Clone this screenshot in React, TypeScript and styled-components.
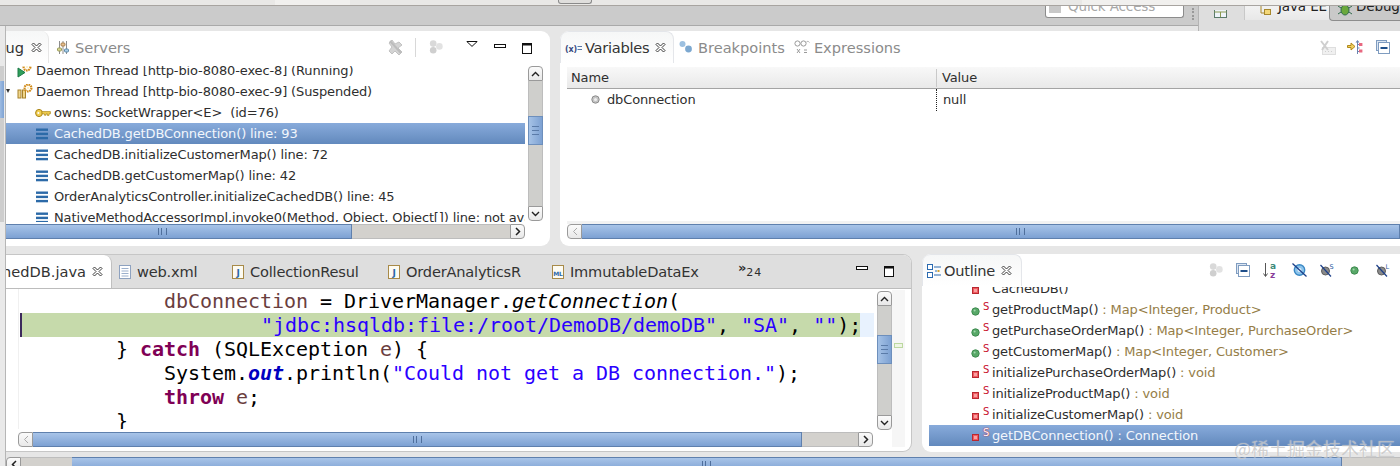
import styled, { createGlobalStyle } from 'styled-components';

const GlobalStyle = createGlobalStyle`
  html, body {
    margin: 0;
    padding: 0;
    background: #e6e6e6;
  }
`;

const BLUE_LINE = '#2c6aa8';

const CloseIcon = () => (
  <svg width="11" height="11" viewBox="0 0 11 11" style={{ flex: 'none' }}>
    <path
      d="M1 2.5 2.5 1 5.5 4 8.5 1 10 2.5 7 5.5 10 8.5 8.5 10 5.5 7 2.5 10 1 8.5 4 5.5Z"
      fill="#fff"
      stroke="#3a3a3a"
      strokeWidth="1"
    />
  </svg>
);

const ServersIcon = () => (
  <svg width="12" height="15" viewBox="0 0 12 15">
    <path d="M2.5 1v13M6 1v13M9.5 1v13" stroke="#8d8d8d" strokeWidth="1" />
    <rect x="0.5" y="8" width="4" height="3" rx="1" fill="#d8d890" stroke="#9a9a5c" />
    <rect x="4" y="3" width="4" height="3" rx="1" fill="#e8c090" stroke="#a8804c" />
    <rect x="7.5" y="9" width="4" height="3" rx="1" fill="#a8cde8" stroke="#5c8aa8" />
  </svg>
);

const Gear = ({ x, y }: { x: number; y: number }) => (
  <g>
    <circle cx={x} cy={y} r="3.4" fill="none" stroke="#d08a18" strokeWidth="2.2" strokeDasharray="1.6 0.7" />
    <circle cx={x} cy={y} r="1.3" fill="#fff2c8" />
  </g>
);

const RunningThreadIcon = () => (
  <svg width="16" height="15" viewBox="0 0 16 15">
    <path d="M1 5 8 9.5 1 14Z" fill="#2f9f5a" stroke="#1d7a48" />
    <Gear x={10} y={4} />
  </svg>
);

const SuspendedThreadIcon = () => (
  <svg width="16" height="15" viewBox="0 0 16 15">
    <rect x="1" y="6" width="3" height="8" fill="#f0d68c" stroke="#a8822c" />
    <rect x="5.5" y="6" width="3" height="8" fill="#f0d68c" stroke="#a8822c" />
    <Gear x={11} y={4} />
  </svg>
);

const KeyIcon = () => (
  <svg width="16" height="10" viewBox="0 0 16 10">
    <ellipse cx="4" cy="5" rx="3.4" ry="3.6" fill="#f2cf52" stroke="#a98416" />
    <circle cx="3.4" cy="5" r="1" fill="#fff" />
    <path d="M7 3.6h8.4v2.2h-1.4v1.6h-1.6V5.8h-1.4v1.4H9.4V5.8H7Z" fill="#f2cf52" stroke="#a98416" strokeWidth="0.7" />
  </svg>
);

const FrameIcon = () => (
  <svg width="12" height="12" viewBox="0 0 12 12">
    <rect x="0" y="0.5" width="12" height="2.4" fill={BLUE_LINE} />
    <rect x="0" y="4.7" width="12" height="2.4" fill={BLUE_LINE} />
    <rect x="0" y="8.9" width="12" height="2.4" fill={BLUE_LINE} />
  </svg>
);

const TwistyIcon = () => (
  <svg width="4" height="5" viewBox="0 0 4 5">
    <path d="M0 0h4L2 4Z" fill="#333" />
  </svg>
);

const BallsIcon = () => (
  <svg width="14" height="14" viewBox="0 0 14 14">
    <circle cx="4.2" cy="3.6" r="3.3" fill="#d9d9d9" />
    <circle cx="10.4" cy="6.4" r="3.3" fill="#e2e2e2" />
    <circle cx="4.2" cy="10.2" r="3.3" fill="#cfcfcf" />
  </svg>
);

const RemoveAllIcon = () => (
  <svg width="16" height="17" viewBox="0 0 16 17">
    <path d="M2 4 5 1 8 5 12 3 15 6 11 9 15 13 12 16 8 12 5 15 2 12 5 8Z" fill="#d4d4d4" stroke="#c2c2c2" />
    <path d="M3 2 14 14" stroke="#bcbcbc" strokeWidth="2" />
  </svg>
);

const MenuTriangle = () => (
  <svg width="12" height="6" viewBox="0 0 12 6">
    <path d="M0.8 0.5h10.4L6 5.4Z" fill="#fff" stroke="#111" />
  </svg>
);

const MinimizeIcon = () => (
  <svg width="12" height="4" viewBox="0 0 12 4">
    <rect x="0.5" y="0.5" width="11" height="3" fill="#fff" stroke="#111" />
  </svg>
);

const MaximizeIcon = () => (
  <svg width="10" height="11" viewBox="0 0 10 11">
    <rect x="0.5" y="0.5" width="9" height="10" fill="#fff" stroke="#111" />
    <rect x="0.5" y="0.5" width="9" height="2" fill="#111" />
  </svg>
);

const VariablesIcon = () => (
  <svg width="17" height="10" viewBox="0 0 17 10">
    <text x="0" y="8.5" fontFamily="'DejaVu Sans', sans-serif" fontSize="8" fontWeight="700" fill="#3a4a80">
      (x)
    </text>
    <path d="M12.5 3.5h4.5M12.5 6.5h4.5" stroke="#5a78a8" />
  </svg>
);

const BreakpointsIcon = () => (
  <svg width="14" height="14" viewBox="0 0 14 14">
    <circle cx="3.5" cy="4" r="3" fill="#9cc0e0" />
    <circle cx="9.5" cy="9" r="3.4" fill="#7ca8d0" />
  </svg>
);

const ExpressionsIcon = () => (
  <svg width="16" height="15" viewBox="0 0 16 15">
    <circle cx="3.5" cy="3.5" r="2.6" fill="none" stroke="#9a9a9a" />
    <circle cx="9.5" cy="3.5" r="2.6" fill="none" stroke="#9a9a9a" />
    <path d="M12 2.5c1-1.5 2.5-1.5 3.5 0" fill="none" stroke="#b0b0b0" />
    <path d="M3 9 6 13M6 9 3 13M10 10h3M10 12.5h3" stroke="#9a9a9a" />
  </svg>
);

const ShowTypesIcon = () => (
  <svg width="17" height="17" viewBox="0 0 17 17">
    <rect x="3.5" y="8.5" width="13" height="7" fill="#f0f0f0" stroke="#dedede" />
    <path d="M2 2 9 11M9 2 3 11" stroke="#cfcfcf" strokeWidth="2" />
    <path d="M6 12.5h1M9 12.5h1M12 12.5h1" stroke="#cfcfcf" />
  </svg>
);

const LogicalIcon = () => (
  <svg width="16" height="15" viewBox="0 0 16 15">
    <path d="M0.5 5.5h3.5V3l4 3.5-4 3.5V7.5H.5Z" fill="#f0d060" stroke="#b08818" />
    <path d="M10.5 1v13M10.5 4.5h2M10.5 8h2M10.5 11.5h2" stroke="#6a84b0" />
    <path d="M8.5 2.5 10.5 0l2 2.5Z" fill="#6a84b0" />
    <rect x="12" y="3" width="3.4" height="3" fill="#e86880" />
    <rect x="12" y="9.5" width="3.4" height="3" fill="#e86880" />
  </svg>
);

const CollapseIcon = () => (
  <svg width="14" height="14" viewBox="0 0 14 14">
    <rect x="0.5" y="0.5" width="10" height="10" fill="#dce6f2" stroke="#7f9cc0" />
    <rect x="2.5" y="2.5" width="11" height="11" fill="#fff" stroke="#7f9cc0" />
    <path d="M4.5 8h7" stroke="#1f4f8a" strokeWidth="2" />
  </svg>
);

const FileIcon = () => (
  <svg width="12" height="14" viewBox="0 0 12 14">
    <rect x="0.5" y="0.5" width="11" height="13" fill="#fff" stroke="#8ea2c0" />
    <path d="M2.5 3.5h7M2.5 6h7M2.5 8.5h7M2.5 11h7" stroke="#9cb0cc" />
  </svg>
);

const JavaFileIcon = ({ label = 'J' }: { label?: string }) => (
  <svg width="12" height="14" viewBox="0 0 12 14">
    <rect x="0.5" y="0.5" width="11" height="13" fill="#fdfbf2" stroke="#a88a48" />
    <text
      x="6"
      y="10.5"
      textAnchor="middle"
      fontFamily="'DejaVu Sans', sans-serif"
      fontSize={label.length > 1 ? 6 : 9}
      fontWeight="700"
      fill="#2a68a8"
    >
      {label}
    </text>
  </svg>
);

const OutlineIcon = () => (
  <svg width="14" height="14" viewBox="0 0 14 14">
    <rect x="0.5" y="0.5" width="5" height="5" fill="#fff" stroke="#2a6ab0" />
    <rect x="0.5" y="8.5" width="5" height="5" fill="#fff" stroke="#2a6ab0" />
    <path d="M7 3h7M7 11h7M8 7h2" stroke="#2a6ab0" />
    <rect x="10.5" y="6" width="2" height="2" fill="#d0a030" />
  </svg>
);

const SortIcon = () => (
  <svg width="17" height="16" viewBox="0 0 17 16">
    <path d="M2.5 1v13M0.5 11.5 2.5 14.5 4.5 11.5" fill="none" stroke="#555" />
    <text x="7" y="7" fontFamily="'DejaVu Sans', sans-serif" fontSize="9" fontWeight="700" fill="#3d8a7a">
      a
    </text>
    <text x="7" y="15.5" fontFamily="'DejaVu Sans', sans-serif" fontSize="9" fontWeight="700" fill="#8a3d9a">
      z
    </text>
  </svg>
);

const HideFieldsIcon = () => (
  <svg width="15" height="14" viewBox="0 0 15 14">
    <circle cx="7.5" cy="7" r="5.2" fill="#8cc4ec" stroke="#3a88c4" strokeWidth="1.4" />
    <circle cx="7.5" cy="7" r="2" fill="#e8f4fc" />
    <path d="M0.5 0.5 14.5 13.5" stroke="#1c3f88" strokeWidth="1.3" />
  </svg>
);

const HideLetterIcon = ({ letter }: { letter: string }) => (
  <svg width="14" height="14" viewBox="0 0 14 14">
    <circle cx="5.5" cy="8" r="4" fill="#8a8a8a" stroke="#5e5e5e" />
    <path d="M0.5 2 11 13.5" stroke="#1c3f88" strokeWidth="1.2" />
    <text x="9.5" y="6" fontFamily="'DejaVu Sans', sans-serif" fontSize="6.5" fill="#2a5aa0">
      {letter}
    </text>
  </svg>
);

const PublicDot = () => (
  <svg width="9" height="9" viewBox="0 0 9 9">
    <circle cx="4.5" cy="4.5" r="3.7" fill="#58a868" stroke="#3f8a50" />
    <circle cx="3.6" cy="3.4" r="1" fill="#a4d8ae" />
  </svg>
);

const PrivateSquare = () => (
  <svg width="7" height="7" viewBox="0 0 7 7">
    <rect x="0.5" y="0.5" width="6" height="6" fill="#f05a60" stroke="#b82830" />
    <rect x="2" y="2" width="3" height="3" fill="#f8a0a0" />
  </svg>
);

const LocalVarDot = () => (
  <svg width="9" height="9" viewBox="0 0 9 9">
    <circle cx="4.5" cy="4.5" r="3.7" fill="#c4c4c4" stroke="#8c8c8c" />
    <circle cx="4.5" cy="4.5" r="1.5" fill="#eee" />
  </svg>
);

const LayoutIcon = () => (
  <svg width="13" height="8" viewBox="0 1 13 8">
    <rect x="0.5" y="0.5" width="12" height="8" fill="#eef4fa" stroke="#5a7a6a" />
    <path d="M0.5 3h12M6.5 3v5" stroke="#8a9a50" />
  </svg>
);

const ArrowLeft = ({ dark }: { dark?: boolean }) => (
  <svg width="6" height="9" viewBox="0 0 6 9">
    <path d="M5 1 1.5 4.5 5 8" fill="none" stroke={dark ? '#222' : '#aaa'} strokeWidth={dark ? 1.5 : 1} />
  </svg>
);

const ArrowRight = () => (
  <svg width="6" height="9" viewBox="0 0 6 9">
    <path d="M1 1 4.5 4.5 1 8" fill="none" stroke="#222" strokeWidth="1.5" />
  </svg>
);

const ArrowUp = () => (
  <svg width="9" height="6" viewBox="0 0 9 6">
    <path d="M1 5 4.5 1.5 8 5" fill="none" stroke="#222" strokeWidth="1.4" />
  </svg>
);

const ArrowDown = () => (
  <svg width="9" height="6" viewBox="0 0 9 6">
    <path d="M1 1 4.5 4.5 8 1" fill="none" stroke="#222" strokeWidth="1.4" />
  </svg>
);

const debugRows = [
  { indent: 11, icon: <RunningThreadIcon />, gap: 3, text: 'Daemon Thread [http-bio-8080-exec-8] (Running)' },
  { indent: 0, twisty: true, icon: <SuspendedThreadIcon />, gap: 3, text: 'Daemon Thread [http-bio-8080-exec-9] (Suspended)' },
  { indent: 29, icon: <KeyIcon />, gap: 3, text: 'owns: SocketWrapper<E>  (id=76)' },
  { indent: 30, icon: <FrameIcon />, gap: 6, text: 'CachedDB.getDBConnection() line: 93', selected: true },
  { indent: 30, icon: <FrameIcon />, gap: 6, text: 'CachedDB.initializeCustomerMap() line: 72' },
  { indent: 30, icon: <FrameIcon />, gap: 6, text: 'CachedDB.getCustomerMap() line: 42' },
  { indent: 30, icon: <FrameIcon />, gap: 6, text: 'OrderAnalyticsController.initializeCachedDB() line: 45' },
  { indent: 30, icon: <FrameIcon />, gap: 6, text: 'NativeMethodAccessorImpl.invoke0(Method, Object, Object[]) line: not available [native method]' },
];

const outlineRows = [
  { pub: false, name: 'CachedDB()', type: '' },
  { pub: true, name: 'getProductMap()', type: ' : Map<Integer, Product>' },
  { pub: true, name: 'getPurchaseOrderMap()', type: ' : Map<Integer, PurchaseOrder>' },
  { pub: true, name: 'getCustomerMap()', type: ' : Map<Integer, Customer>' },
  { pub: false, name: 'initializePurchaseOrderMap()', type: ' : void' },
  { pub: false, name: 'initializeProductMap()', type: ' : void' },
  { pub: false, name: 'initializeCustomerMap()', type: ' : void' },
  { pub: false, name: 'getDBConnection()', type: ' : Connection', selected: true },
];

const editorTabs = [
  { icon: <FileIcon />, label: 'web.xml', width: 113 },
  { icon: <JavaFileIcon />, label: 'CollectionResul', width: 156 },
  { icon: <JavaFileIcon />, label: 'OrderAnalyticsR', width: 164 },
  { icon: <JavaFileIcon label="ML" />, label: 'ImmutableDataEx', width: 186 },
];

const App = () => (
  <Page>
    <GlobalStyle />
    <TitleStrip>
      <TitleSegment $width={275} />
      <TitleSegment $width={75} $light />
      <TitleSegment $width={208} />
      <FadedButton />
      <TitleSegment $width={490} />
      <TitleSegment $light />
    </TitleStrip>
    <Toolbar>
      <QuickAccess>
        <QuickIcon />
        <PerspectiveLabel>Quick Access</PerspectiveLabel>
      </QuickAccess>
      <GripLine />
      <Perspectives>
        <PerspectiveOpen>
          <LayoutIcon />
        </PerspectiveOpen>
        <JavaPerspective>
          <svg width="13" height="9" viewBox="0 2 13 9">
            <path d="M1 1h5M3 1v8h3" fill="none" stroke="#a8882c" />
            <rect x="6.5" y="5.5" width="6" height="5" fill="#f4d878" stroke="#a8882c" />
          </svg>
          <PerspectiveLabel>Java EE</PerspectiveLabel>
        </JavaPerspective>
        <DebugPerspective>
          <svg width="16" height="10" viewBox="0 3 16 10">
            <ellipse cx="8" cy="7" rx="4" ry="5" fill="#6aa83c" stroke="#2f6a4a" />
            <path d="M1 3l3 2M15 3l-3 2M1 11l3-2M15 11l-3-2" stroke="#2f6a4a" />
          </svg>
          <PerspectiveLabel>Debug</PerspectiveLabel>
        </DebugPerspective>
      </Perspectives>
    </Toolbar>
    <Body>
      <Gutter>
        <GutterScroll>
          <GutterThumb />
        </GutterScroll>
      </Gutter>
      <Main>
        <TopRow>
          <DebugPanel>
            <ViewHeader>
              <ClippedTab $width={43}>
                <TabLabel>Debug</TabLabel>
                <CloseIcon />
              </ClippedTab>
              <PlainTab $gap={6} $left={8}>
                <ServersIcon />
                <TabLabel $muted>Servers</TabLabel>
              </PlainTab>
              <ViewTools>
                <ToolSlot $left={0}>
                  <RemoveAllIcon />
                </ToolSlot>
                <ToolSep />
                <ToolSlot $left={13}>
                  <BallsIcon />
                </ToolSlot>
                <ToolSlot $left={23} $up={7}>
                  <MenuTriangle />
                </ToolSlot>
                <ToolSlot $left={16} $up={3}>
                  <MinimizeIcon />
                </ToolSlot>
                <ToolSlot $left={16} $up={-2}>
                  <MaximizeIcon />
                </ToolSlot>
              </ViewTools>
            </ViewHeader>
            <DebugBody>
              <DebugList>
                <DebugRows>
                  {debugRows.map((row) => (
                    <TreeRow key={row.text} $indent={row.indent} $selected={row.selected}>
                      {row.twisty && (
                        <Twisty>
                          <TwistyIcon />
                        </Twisty>
                      )}
                      {row.icon}
                      <RowText $gap={row.gap}>{row.text}</RowText>
                    </TreeRow>
                  ))}
                </DebugRows>
              </DebugList>
              <VScroll $height={155} $margin="0 7px 0 3px">
                <ScrollButton $dir="up">
                  <ArrowUp />
                </ScrollButton>
                <VTrack $height={35} />
                <VThumb $height={29}>
                  <ThumbGrip />
                </VThumb>
                <VTrack $flex />
                <ScrollButton $dir="down">
                  <ArrowDown />
                </ScrollButton>
              </VScroll>
            </DebugBody>
            <HScroll $width={519} $top={2}>
              <HThumb $width={346} $gripShift={-32}>
                <HGrip />
              </HThumb>
              <HTrack />
              <ScrollButton $dir="right">
                <ArrowRight />
              </ScrollButton>
            </HScroll>
          </DebugPanel>
          <VariablesPanel>
            <ViewHeader $height={36}>
              <ActiveTab $width={114}>
                <VariablesIcon />
                <TabLabel $tight>Variables</TabLabel>
                <CloseIcon />
              </ActiveTab>
              <PlainTab $gap={5} $left={5}>
                <BreakpointsIcon />
                <TabLabel $muted>Breakpoints</TabLabel>
              </PlainTab>
              <PlainTab $gap={4} $left={9}>
                <ExpressionsIcon />
                <TabLabel $muted>Expressions</TabLabel>
              </PlainTab>
              <ViewTools $pad={10}>
                <ToolSlot $left={0}>
                  <ShowTypesIcon />
                </ToolSlot>
                <ToolSlot $left={11}>
                  <LogicalIcon />
                </ToolSlot>
                <ToolSlot $left={13}>
                  <CollapseIcon />
                </ToolSlot>
              </ViewTools>
            </ViewHeader>
            <VarTable>
              <VarHead>
                <VarNameHead>Name</VarNameHead>
                <VarValueHead>Value</VarValueHead>
              </VarHead>
              <VarRow>
                <VarName>
                  <LocalVarDot />
                  dbConnection
                </VarName>
                <VarValue>null</VarValue>
              </VarRow>
            </VarTable>
            <VarScrollEdge />
            <HScroll $left={7}>
              <ScrollButton $dir="left">
                <ArrowLeft />
              </ScrollButton>
              <HThumb $flex $gripShift={60}>
                <HGrip />
              </HThumb>
            </HScroll>
          </VariablesPanel>
        </TopRow>
        <BottomRow>
          <EditorPanel>
            <EditorTabs>
              <ClippedTab $width={106} $solid>
                <TabLabel>CachedDB.java</TabLabel>
                <CloseIcon />
              </ClippedTab>
              {editorTabs.map((tab) => (
                <EditorTab key={tab.label} $width={tab.width}>
                  {tab.icon}
                  <TabLabel $narrow>{tab.label}</TabLabel>
                </EditorTab>
              ))}
              <MoreTabs>
                »<sub>24</sub>
              </MoreTabs>
              <EditorTools>
                <MinimizeIcon />
                <MaximizeIcon />
              </EditorTools>
            </EditorTabs>
            <EditorBody>
              <CodeColumn>
                <CodeArea>
                  <CodeLine>
                    {'            '}
                    <Field>dbConnection</Field> = DriverManager.<StaticCall>getConnection</StaticCall>(
                  </CodeLine>
                  <DebugLine>
                    <DebugLineFill>
                      {'                    '}
                      <Str>"jdbc:hsqldb:file:/root/DemoDB/demoDB"</Str>, <Str>"SA"</Str>, <Str>""</Str>);
                    </DebugLineFill>
                  </DebugLine>
                  <CodeLine>
                    {'        }'} <Keyword>catch</Keyword> (SQLException <Field>e</Field>) {'{'}
                  </CodeLine>
                  <CodeLine>
                    {'            '}System.<StaticField>out</StaticField>.println(
                    <Str>"Could not get a DB connection."</Str>);
                  </CodeLine>
                  <CodeLine>
                    {'            '}
                    <Keyword>throw</Keyword> <Field>e</Field>;
                  </CodeLine>
                  <CodeLine>{'        }'}</CodeLine>
                </CodeArea>
                <HScroll $width={855} $top={3} $left={12}>
                  <ScrollButton $dir="left">
                    <ArrowLeft />
                  </ScrollButton>
                  <HThumb $flex>
                    <HGrip />
                  </HThumb>
                  <HTrack $width={56} />
                  <ScrollButton $dir="right">
                    <ArrowRight />
                  </ScrollButton>
                </HScroll>
              </CodeColumn>
              <VScroll $height={139} $margin="2px 0 0 3px">
                <ScrollButton $dir="up">
                  <ArrowUp />
                </ScrollButton>
                <VTrack $height={29} />
                <VThumb $height={29}>
                  <ThumbGrip />
                </VThumb>
                <VTrack $flex />
                <ScrollButton $dir="down">
                  <ArrowDown />
                </ScrollButton>
              </VScroll>
              <OverviewRuler>
                <RulerMark />
              </OverviewRuler>
            </EditorBody>
          </EditorPanel>
          <OutlinePanel>
            <OutlineHeader>
              <ActiveTab $width={100}>
                <OutlineIcon />
                <TabLabel $tight>Outline</TabLabel>
                <CloseIcon />
              </ActiveTab>
              <ViewTools $pad={10}>
                <ToolSlot $left={0}>
                  <BallsIcon />
                </ToolSlot>
                <ToolSlot $left={13}>
                  <CollapseIcon />
                </ToolSlot>
                <ToolSlot $left={13}>
                  <SortIcon />
                </ToolSlot>
                <ToolSlot $left={12}>
                  <HideFieldsIcon />
                </ToolSlot>
                <ToolSlot $left={13}>
                  <HideLetterIcon letter="S" />
                </ToolSlot>
                <ToolSlot $left={16}>
                  <PublicDot />
                </ToolSlot>
                <ToolSlot $left={17}>
                  <HideLetterIcon letter="L" />
                </ToolSlot>
              </ViewTools>
            </OutlineHeader>
            <OutlineList>
              <OutlineRows>
                {outlineRows.map((row) => (
                  <OutlineRow key={row.name} $selected={row.selected}>
                    <Visibility>{row.pub ? <PublicDot /> : <PrivateSquare />}</Visibility>
                    <StaticMark $hidden={row.name === 'CachedDB()'} $selected={row.selected}>
                      S
                    </StaticMark>
                    <span>{row.name}</span>
                    <ReturnType $selected={row.selected}>{row.type}</ReturnType>
                  </OutlineRow>
                ))}
              </OutlineRows>
            </OutlineList>
          </OutlinePanel>
        </BottomRow>
        <WindowScroll>
          <ScrollButton $dir="left">
            <ArrowLeft dark />
          </ScrollButton>
          <HTrack $width={51} />
          <HThumb $width={1270}>
            <HGrip />
          </HThumb>
          <HTrack />
        </WindowScroll>
      </Main>
    </Body>
    <Watermark>@稀土掘金技术社区</Watermark>
  </Page>
);

export default App;

const Page = styled.div`
  position: relative;
  width: 1400px;
  height: 466px;
  overflow: hidden;
  display: flex;
  flex-direction: column;
  background: #e6e6e6;
  font-family: 'DejaVu Sans', sans-serif;
  font-size: 13px;
  letter-spacing: -0.13px;
  color: #2e2e2e;
`;

const TitleStrip = styled.div`
  height: 5px;
  display: flex;
  background: #e9e8e6;
  border-bottom: 1px solid #a8a4a0;
  flex: none;
`;

const TitleSegment = styled.div<{ $width?: number; $light?: boolean }>`
  width: ${(p) => (p.$width ? `${p.$width}px` : 'auto')};
  flex: ${(p) => (p.$width ? 'none' : 1)};
  background: ${(p) => (p.$light ? '#f1f0ee' : '#e9e8e6')};
`;

const FadedButton = styled.div`
  width: 32px;
  height: 3px;
  background: #dfdedc;
  border: 1px solid #8a8a8a;
  border-top: 0;
  border-radius: 0 0 3px 3px;
  flex: none;
`;

const Toolbar = styled.div`
  height: 19px;
  flex: none;
  display: flex;
  justify-content: flex-end;
  background: #cbcbcb;
  border-bottom: 1px solid #a9a9a9;
  position: relative;
  overflow: visible;
`;

const QuickAccess = styled.div`
  width: 134px;
  height: 11px;
  flex: none;
  margin-right: 8px;
  padding-left: 3px;
  display: flex;
  align-items: flex-start;
  gap: 7px;
  background: #fff;
  border: 1px solid #8c8c8c;
  border-top: 0;
  border-radius: 0 0 3px 3px;
  color: #a8a8a8;
  overflow: hidden;
`;

const QuickIcon = styled.span`
  width: 12px;
  height: 7px;
  background: #c8c8c8;
  flex: none;
`;

const GripLine = styled.div`
  width: 3px;
  margin-right: 1px;
  margin-top: 2px;
  height: 12px;
  border-left: 2px dotted #999;
  flex: none;
`;

const Perspectives = styled.div`
  width: 201px;
  height: 25px;
  flex: none;
  display: flex;
  background: #dedede;
  border-left: 1px solid #b4b4b4;
  overflow: hidden;
`;

const PerspectiveOpen = styled.div`
  width: 45px;
  padding: 0 0 0 15px;
  box-sizing: border-box;
  flex: none;
`;

const PerspectiveLabel = styled.span`
  margin-top: -7px;
  font-size: 13.5px;
  line-height: 15px;
  white-space: pre;
`;

const JavaPerspective = styled.div`
  width: 85px;
  height: 14px;
  flex: none;
  display: flex;
  gap: 7px;
  padding-left: 13px;
  box-sizing: border-box;
  align-items: flex-start;
  border-left: 1px solid #c8c8c8;
  background: linear-gradient(#f2f2f2, #e8e8e8);
  color: #222;
  overflow: hidden;
`;

const DebugPerspective = styled.div`
  height: 14px;
  flex: 1;
  display: flex;
  gap: 3px;
  padding-left: 7px;
  align-items: flex-start;
  background: #c9c9c9;
  border: 1px solid #8d8d8d;
  border-top: 0;
  border-right: 0;
  border-radius: 0 0 0 4px;
  color: #222;
  overflow: hidden;
`;

const Body = styled.div`
  flex: 1;
  display: flex;
  min-height: 0;
`;

const Gutter = styled.div`
  width: 5px;
  flex: none;
  border-right: 1px solid #b6b6b6;
  padding-top: 40px;
  background: #e9e9e9;
`;

const GutterScroll = styled.div`
  height: 156px;
  background: #cdcdcd;
  padding-top: 15px;
  margin-right: 1px;
  box-sizing: border-box;
`;

const GutterThumb = styled.div`
  height: 37px;
  background: linear-gradient(90deg, #9dbbe2, #7fa3d3);
`;

const Main = styled.div`
  flex: 1;
  min-width: 0;
  padding-top: 5px;
  display: flex;
  flex-direction: column;
`;

const TopRow = styled.div`
  height: 215px;
  flex: none;
  display: flex;
  gap: 10px;
`;

const BottomRow = styled.div`
  height: 198px;
  flex: none;
  margin-top: 8px;
  display: flex;
  gap: 10px;
`;

const DebugPanel = styled.section`
  width: 544px;
  flex: none;
  background: #fff;
  border-radius: 0 9px 9px 0;
  overflow: hidden;
  display: flex;
  flex-direction: column;
`;

const VariablesPanel = styled.section`
  flex: 1;
  min-width: 0;
  background: #fff;
  border-radius: 9px 0 0 9px;
  overflow: hidden;
  display: flex;
  flex-direction: column;
`;

const ViewHeader = styled.header<{ $height?: number }>`
  height: ${(p) => p.$height ?? 35}px;
  flex: none;
  display: flex;
  align-items: stretch;
`;

const ClippedTab = styled.div<{ $width: number; $solid?: boolean }>`
  width: ${(p) => p.$width}px;
  flex: none;
  height: ${(p) => (p.$solid ? 33 : 32)}px;
  display: flex;
  align-items: center;
  justify-content: flex-end;
  gap: ${(p) => (p.$solid ? 6 : 7)}px;
  padding-right: ${(p) => (p.$solid ? 8 : 6)}px;
  box-sizing: border-box;
  overflow: hidden;
  background: ${(p) => (p.$solid ? '#fff' : 'linear-gradient(#f6f7f7, #ffffff)')};
  border-right: 1px solid ${(p) => (p.$solid ? '#c0c0c0' : '#e6e6e6')};
  border-radius: 0 8px 0 0;
`;

const ActiveTab = styled.div<{ $width: number }>`
  width: ${(p) => p.$width}px;
  flex: none;
  height: 32px;
  display: flex;
  align-items: center;
  gap: 3px;
  padding-left: 4px;
  box-sizing: border-box;
  background: linear-gradient(#f6f7f7, #ffffff);
  border: 1px solid #e4e6ea;
  border-bottom: 0;
  border-radius: 8px 8px 0 0;
  & > svg:last-child {
    margin-left: 3px;
  }
`;

const PlainTab = styled.div<{ $gap?: number; $left?: number }>`
  height: 32px;
  flex: none;
  display: flex;
  align-items: center;
  gap: ${(p) => p.$gap ?? 5}px;
  margin-left: ${(p) => p.$left ?? 5}px;
`;

const TabLabel = styled.span<{ $muted?: boolean; $tight?: boolean; $narrow?: boolean }>`
  font-size: 14.6px;
  letter-spacing: ${(p) => (p.$tight ? -0.25 : p.$narrow ? -0.2 : 0)}px;
  white-space: pre;
  flex: none;
  color: ${(p) => (p.$muted ? '#8b8b8b' : '#333')};
`;

const ViewTools = styled.div<{ $pad?: number }>`
  margin-left: auto;
  height: 32px;
  display: flex;
  align-items: center;
  padding-right: ${(p) => p.$pad ?? 18}px;
`;

const ToolSlot = styled.span<{ $left: number; $up?: number }>`
  display: flex;
  flex: none;
  margin-left: ${(p) => p.$left}px;
  margin-bottom: ${(p) => p.$up ?? 0}px;
`;

const ToolSep = styled.span`
  width: 1px;
  height: 19px;
  margin-left: 12px;
  background: #d8d8d8;
  flex: none;
`;

const DebugBody = styled.div`
  height: 156px;
  flex: none;
  display: flex;
`;

const DebugList = styled.div`
  flex: 1;
  min-width: 0;
  overflow: hidden;
`;

const DebugRows = styled.div`
  margin-top: -6px;
`;

const TreeRow = styled.div<{ $indent: number; $selected?: boolean }>`
  height: 21px;
  display: flex;
  align-items: center;
  padding-left: ${(p) => p.$indent}px;
  white-space: pre;
  color: ${(p) => (p.$selected ? '#f2f6fc' : '#2e2e2e')};
  background: ${(p) => (p.$selected ? 'linear-gradient(#88abdb, #6289bd)' : 'transparent')};
  & > svg {
    flex: none;
  }
`;

const Twisty = styled.span`
  width: 11px;
  flex: none;
  display: flex;
`;

const RowText = styled.span<{ $gap: number }>`
  margin-left: ${(p) => p.$gap}px;
`;

const VScroll = styled.div<{ $height: number; $margin: string }>`
  width: 15px;
  height: ${(p) => p.$height}px;
  margin: ${(p) => p.$margin};
  flex: none;
  display: flex;
  flex-direction: column;
`;

const ScrollButton = styled.div<{ $dir: 'up' | 'down' | 'left' | 'right' }>`
  flex: none;
  display: flex;
  align-items: center;
  justify-content: center;
  box-sizing: border-box;
  width: 15px;
  height: ${(p) => (p.$dir === 'up' || p.$dir === 'down' ? '15px' : '100%')};
  background: linear-gradient(#fbfbfb, #e8e8e8);
  border: 1px solid #9a9a9a;
  border-radius: ${(p) =>
    p.$dir === 'up'
      ? '4px 4px 0 0'
      : p.$dir === 'down'
        ? '0 0 4px 4px'
        : p.$dir === 'left'
          ? '4px 0 0 4px'
          : '0 4px 4px 0'};
`;

const VTrack = styled.div<{ $height?: number; $flex?: boolean }>`
  flex: ${(p) => (p.$flex ? 1 : 'none')};
  height: ${(p) => (p.$height ? `${p.$height}px` : 'auto')};
  background: #cfcfcc;
  border-left: 1px solid #bdbdbd;
  border-right: 1px solid #bdbdbd;
`;

const VThumb = styled.div<{ $height: number }>`
  flex: none;
  height: ${(p) => p.$height}px;
  display: flex;
  align-items: center;
  justify-content: center;
  background: linear-gradient(90deg, #a5c2e6, #7da1d2);
  border: 1px solid #6d8fbc;
  box-sizing: border-box;
`;

const ThumbGrip = styled.span`
  width: 7px;
  height: 7px;
  border-top: 1px solid #5a7ba8;
  border-bottom: 1px solid #5a7ba8;
  position: relative;
  &::after {
    content: '';
    position: absolute;
    left: 0;
    right: 0;
    top: 3px;
    height: 1px;
    background: #5a7ba8;
  }
`;

const HScroll = styled.div<{ $width?: number; $top?: number; $left?: number }>`
  height: 15px;
  flex: none;
  width: ${(p) => (p.$width ? `${p.$width}px` : 'auto')};
  margin-top: ${(p) => p.$top ?? 0}px;
  margin-left: ${(p) => p.$left ?? 0}px;
  display: flex;
`;

const HThumb = styled.div<{ $width?: number; $flex?: boolean; $gripShift?: number }>`
  flex: ${(p) => (p.$flex ? 1 : 'none')};
  width: ${(p) => (p.$width ? `${p.$width}px` : 'auto')};
  display: flex;
  align-items: center;
  justify-content: center;
  padding-left: ${(p) => Math.max(p.$gripShift ?? 0, 0)}px;
  padding-right: ${(p) => Math.max(-(p.$gripShift ?? 0), 0)}px;
  background: linear-gradient(#a8c4e8, #7da1d3);
  border-top: 1px solid #5f80ad;
  border-bottom: 1px solid #5f80ad;
  border-right: 1px solid #5f80ad;
  box-sizing: border-box;
`;

const HGrip = styled.span`
  width: 7px;
  height: 7px;
  border-left: 1px solid #4f6f9c;
  border-right: 1px solid #4f6f9c;
  position: relative;
  &::after {
    content: '';
    position: absolute;
    top: 0;
    bottom: 0;
    left: 2px;
    width: 1px;
    background: #4f6f9c;
  }
`;

const HTrack = styled.div<{ $width?: number }>`
  flex: ${(p) => (p.$width ? 'none' : 1)};
  width: ${(p) => (p.$width ? `${p.$width}px` : 'auto')};
  background: #d3d1cd;
  border-top: 1px solid #bdbdbd;
  border-bottom: 1px solid #bdbdbd;
  box-sizing: border-box;
`;

const VarTable = styled.div`
  height: 154px;
  flex: none;
  margin-left: 7px;
`;

const VarHead = styled.div`
  height: 22px;
  display: flex;
  box-sizing: border-box;
  align-items: center;
  background: linear-gradient(#f8f8f8, #e9e9e9);
  border-bottom: 1px solid #a4a4a4;
`;

const VarNameHead = styled.div`
  width: 369px;
  padding-left: 4px;
  box-sizing: border-box;
  flex: none;
`;

const VarValueHead = styled.div`
  padding-left: 5px;
  height: 18px;
  line-height: 18px;
  border-left: 1px solid #c9c9c9;
`;

const VarRow = styled.div`
  display: flex;
  height: 22px;
  align-items: flex-start;
`;

const VarName = styled.div`
  width: 369px;
  height: 20px;
  flex: none;
  box-sizing: border-box;
  padding-left: 24px;
  display: flex;
  align-items: center;
  gap: 7px;
`;

const VarValue = styled.div`
  padding-left: 6px;
  height: 22px;
  line-height: 21px;
  border-left: 1px dotted #222;
`;

const VarScrollEdge = styled.div`
  height: 3px;
  margin-left: 7px;
  flex: none;
  background: #f2f2f2;
`;

const EditorPanel = styled.section`
  width: 906px;
  flex: none;
  box-sizing: border-box;
  background: #fff;
  border: 1px solid #c6c6c6;
  border-left: 0;
  border-radius: 0 9px 9px 0;
  overflow: hidden;
  display: flex;
  flex-direction: column;
`;

const EditorTabs = styled.div`
  height: 33px;
  flex: none;
  display: flex;
  background: #dedede;
  border-bottom: 1px solid #bcbcbc;
`;

const EditorTab = styled.div<{ $width: number }>`
  width: ${(p) => p.$width}px;
  flex: none;
  display: flex;
  align-items: center;
  gap: 6px;
  padding-left: 7px;
  box-sizing: border-box;
`;

const MoreTabs = styled.div`
  width: 40px;
  flex: none;
  margin-left: 7px;
  font-size: 13px;
  font-weight: 700;
  line-height: 26px;
  sub {
    font-size: 11px;
    font-weight: 400;
    vertical-align: -4px;
    letter-spacing: 1px;
  }
`;

const EditorTools = styled.div`
  margin-left: auto;
  padding: 11px 17px 0 0;
  display: flex;
  align-items: flex-start;
  gap: 16px;
`;

const EditorBody = styled.div`
  flex: 1;
  min-height: 0;
  display: flex;
`;

const CodeColumn = styled.div`
  width: 868px;
  flex: none;
`;

const CodeArea = styled.pre`
  margin: 0;
  height: 140px;
  padding-left: 14px;
  box-sizing: border-box;
  overflow: hidden;
  font-family: 'DejaVu Sans Mono', monospace;
  font-size: 20px;
  line-height: 24px;
  letter-spacing: -0.04px;
  color: #000;
  box-shadow: inset 12px 0 0 #fff, inset 13px 0 0 #f0f0f0;
`;

const CodeLine = styled.div`
  height: 24px;
  white-space: pre;
`;

const DebugLine = styled.div`
  height: 24px;
  background: #e8f2fe;
  border-left: 2px solid #3c2a5c;
`;

const DebugLineFill = styled.div`
  width: 838px;
  height: 24px;
  text-indent: -1px;
  background: #c6daab;
  white-space: pre;
`;

const Field = styled.span`
  color: #6a3e3e;
`;

const Str = styled.span`
  color: #2a00ff;
`;

const Keyword = styled.span`
  color: #7f0055;
  font-weight: 700;
`;

const StaticCall = styled.span`
  font-style: italic;
`;

const StaticField = styled.span`
  color: #0000c0;
  font-style: italic;
  font-weight: 700;
`;

const OverviewRuler = styled.div`
  width: 13px;
  margin-top: 1px;
  height: 157px;
  flex: none;
  background: #f6f6f6;
  padding: 53px 0 0 2px;
  box-sizing: border-box;
`;

const RulerMark = styled.div`
  width: 9px;
  height: 5px;
  box-sizing: border-box;
  background: #eef5e4;
  border: 1px solid #bcd8a0;
`;

const OutlinePanel = styled.section`
  flex: 1;
  min-width: 0;
  background: #fff;
  border-radius: 9px 0 0 9px;
  overflow: hidden;
  display: flex;
  flex-direction: column;
`;

const OutlineHeader = styled.header`
  height: 33px;
  flex: none;
  display: flex;
`;

const OutlineList = styled.div`
  flex: 1;
  min-height: 0;
  overflow: hidden;
`;

const OutlineRows = styled.div`
  margin-top: -9px;
  padding-left: 7px;
`;

const OutlineRow = styled.div<{ $selected?: boolean }>`
  height: 21px;
  display: flex;
  align-items: center;
  padding-left: 40px;
  white-space: pre;
  color: ${(p) => (p.$selected ? '#f2f6fc' : '#2e2e2e')};
  background: ${(p) => (p.$selected ? 'linear-gradient(#88abdb, #6289bd)' : 'transparent')};
`;

const Visibility = styled.span`
  width: 12px;
  flex: none;
  display: flex;
  justify-content: center;
  margin-top: 3px;
`;

const StaticMark = styled.span<{ $hidden?: boolean; $selected?: boolean }>`
  width: 11px;
  flex: none;
  padding-left: 2px;
  box-sizing: border-box;
  font-size: 10px;
  line-height: 9px;
  margin-bottom: 7px;
  visibility: ${(p) => (p.$hidden ? 'hidden' : 'visible')};
  color: ${(p) => (p.$selected ? '#fff' : '#c8102e')};
  text-shadow: ${(p) => (p.$selected ? '0 0 1px #c8102e, 0 0 1px #c8102e' : 'none')};
`;

const ReturnType = styled.span<{ $selected?: boolean }>`
  color: ${(p) => (p.$selected ? '#f2f6fc' : '#957d47')};
`;

const WindowScroll = styled.div`
  height: 15px;
  margin-top: 5px;
  flex: none;
  display: flex;
`;

const Watermark = styled.div`
  position: absolute;
  left: 1234px;
  top: 436px;
  font-family: 'Noto Sans CJK SC', sans-serif;
  font-size: 18px;
  line-height: 24px;
  letter-spacing: 0;
  white-space: nowrap;
  color: rgba(170, 170, 170, 0.55);
  text-shadow: 0 0 1px rgba(255, 255, 255, 0.7);
`;
